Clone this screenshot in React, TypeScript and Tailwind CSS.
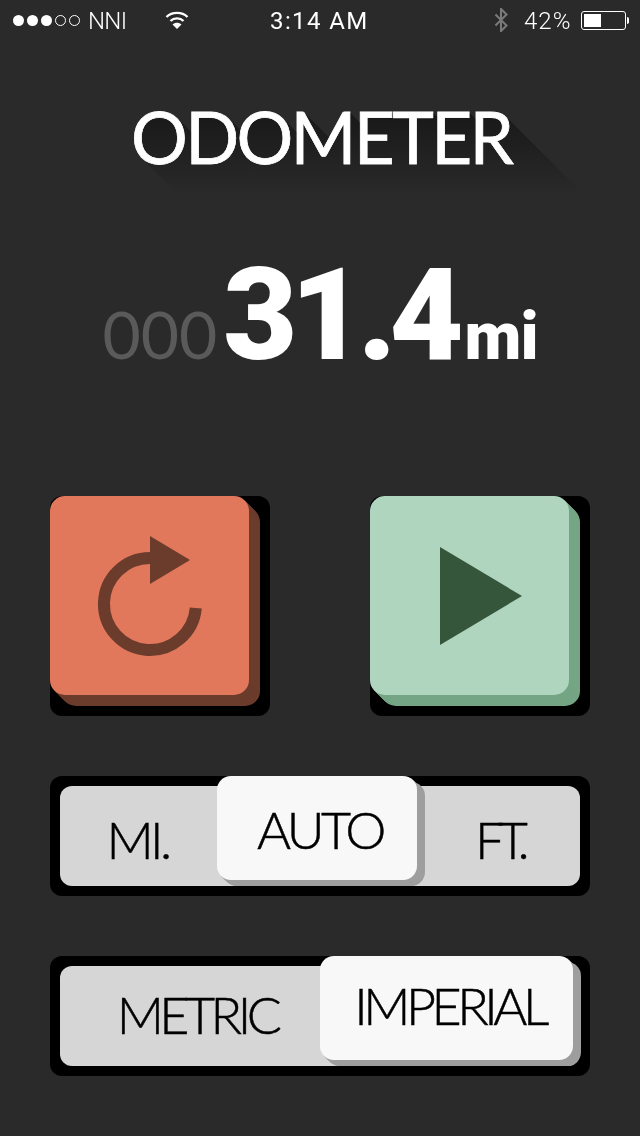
const futura = "font-['Lato','Liberation_Sans',sans-serif]";
const heavy = "font-['Roboto','Liberation_Sans',sans-serif]";

const longShadow = Array.from({ length: 68 }, (_, i) => `${i + 1}px ${i + 1}px 0 #000`).join(",");

function StatusBar() {
  return (
    <div className="flex h-[40px] items-center text-white font-['Roboto','Liberation_Sans',sans-serif] text-[24px] font-light">
      <div className="ml-[13px] flex w-[67px] items-center gap-[3px]">
        {[0, 1, 2].map((i) => (
          <span key={i} className="size-[11px] rounded-full bg-white" />
        ))}
        {[0, 1].map((i) => (
          <span key={i} className="size-[11px] rounded-full border border-white" />
        ))}
      </div>
      <span className="ml-[8px] mt-[1px] w-[38px] tracking-[-0.7px]">NNI</span>
      <svg viewBox="0 0 24 20" className="ml-[39px] -mt-[1px] h-[20px] w-[24px]" fill="none" stroke="white" strokeWidth="2.4">
        <path d="M1.5 7 C7 1.5 17 1.5 22.5 7" />
        <path d="M5.5 11 C9 7.5 15 7.5 18.5 11" />
        <path d="M12 19 L7.5 14.5 C10 12 14 12 16.5 14.5 Z" fill="white" stroke="none" />
      </svg>
      <span className="ml-[81px] mt-[1px] w-[100px] font-normal tracking-[1.4px]">3:14 AM</span>
      <svg viewBox="0 0 16 26" className="ml-[123px] h-[24px] w-[16px]" fill="none" stroke="#7a7a7a" strokeWidth="2.2">
        <path d="M2 7 L14 19 L8 25 L8 1 L14 7 L2 19" />
      </svg>
      <span className="ml-[15px] mt-[1px] w-[51px] tracking-[1px]">42%</span>
      <div className="ml-[6px] flex items-center">
        <div className="h-[19px] w-[45px] rounded-[3px] border border-white p-[2px]">
          <div className="h-full w-[17px] bg-white" />
        </div>
        <div className="ml-[1px] h-[7px] w-[2px] rounded-r-full bg-white" />
      </div>
    </div>
  );
}

function Title() {
  return (
    <div className="relative mt-[50px] h-[105px] overflow-hidden">
      <h1
        className={`${futura} ml-[126px] pl-[5px] text-[71px] leading-[94px] font-normal tracking-[-2.7px] whitespace-nowrap text-white [-webkit-text-stroke:0.8px_white]`}
        style={{ textShadow: longShadow }}
      >
        ODOMETER
      </h1>
      <div className="absolute inset-0 bg-gradient-to-b from-[#141414] to-[#2a2a2a] mix-blend-lighten" />
    </div>
  );
}

function Odometer() {
  return (
    <div className="mt-[60px] flex h-[120px] items-baseline justify-center">
      <span className={`${futura} text-[66px] leading-[120px] font-normal text-[#5a5a5a]`}>000</span>
      <span className={`${heavy} ml-[6px] text-[128px] leading-[120px] font-black tracking-[-7px] text-white`}>31.4</span>
      <span className={`${heavy} ml-[8px] text-[66px] leading-[120px] font-black tracking-[-1px] text-white`}>mi</span>
    </div>
  );
}

function Buttons() {
  return (
    <div className="mx-[50px] mt-[121px] flex justify-between">
      <div className="h-[220px] w-[220px] rounded-[12px] bg-black">
        <button className="flex h-[199px] w-[199px] rounded-[15px] bg-[#e1785b] shadow-[1px_1px_0_#6b3b2c,2px_2px_0_#6b3b2c,3px_3px_0_#6b3b2c,4px_4px_0_#6b3b2c,5px_5px_0_#6b3b2c,6px_6px_0_#6b3b2c,7px_7px_0_#6b3b2c,8px_8px_0_#6b3b2c,9px_9px_0_#6b3b2c,10px_10px_0_#6b3b2c,11px_11px_0_#6b3b2c]">
          <svg viewBox="0 0 199 199" className="h-full w-full" fill="none">
            <path d="M145.8 112 A46 46 0 1 1 100 62" stroke="#6b3b2c" strokeWidth="12" />
            <path d="M100 40 L140 64 L100 88 Z" fill="#6b3b2c" />
          </svg>
        </button>
      </div>
      <div className="h-[220px] w-[220px] rounded-[12px] bg-black">
        <button className="flex h-[199px] w-[199px] rounded-[15px] bg-[#afd5be] shadow-[1px_1px_0_#74a584,2px_2px_0_#74a584,3px_3px_0_#74a584,4px_4px_0_#74a584,5px_5px_0_#74a584,6px_6px_0_#74a584,7px_7px_0_#74a584,8px_8px_0_#74a584,9px_9px_0_#74a584,10px_10px_0_#74a584,11px_11px_0_#74a584]">
          <svg viewBox="0 0 199 199" className="h-full w-full">
            <path d="M70 51 L152 100 L70 149 Z" fill="#36563c" />
          </svg>
        </button>
      </div>
    </div>
  );
}

const thumb =
  "shrink-0 self-start -mt-[10px] h-[104px] rounded-[14px] bg-[#f8f8f8] flex items-center justify-center shadow-[1px_1px_0_#9e9e9e,2px_2px_0_#9e9e9e,3px_3px_0_#9e9e9e,4px_4px_0_#9e9e9e,5px_5px_0_#9e9e9e,6px_6px_0_#9e9e9e,7px_6px_0_#9e9e9e,8px_6px_0_#9e9e9e]";

function Segments() {
  return (
    <div className={`${futura} mx-[50px] font-light text-black [-webkit-text-stroke:0.5px_black]`}>
      <div className="mt-[60px] rounded-[12px] bg-black p-[10px]">
        <div className="flex h-[100px] items-center rounded-[12px] bg-[#d6d6d6] text-[52px] tracking-[-3.6px]">
          <span className="w-[157px] pt-[6px] pr-[2px] text-center">MI.</span>
          <div className={`${thumb} w-[200px] pt-[2px] pl-[6px]`}>AUTO</div>
          <span className="flex-1 pt-[6px] pl-[1px] text-center tracking-[-6.5px]">FT.</span>
        </div>
      </div>
      <div className="mt-[60px] rounded-[12px] bg-black p-[10px]">
        <div className="flex h-[100px] items-center rounded-[12px] bg-[#d6d6d6] text-[52px] tracking-[-4.5px]">
          <span className="w-[260px] pb-[4px] pl-[14px] text-center">METRIC</span>
          <div className={`${thumb} w-[253px] pb-[6px] pl-[6px]`}>IMPERIAL</div>
        </div>
      </div>
    </div>
  );
}

export default function App() {
  return (
    <div className="h-[1136px] w-[640px] overflow-hidden bg-[#2a2a2a]">
      <StatusBar />
      <Title />
      <Odometer />
      <Buttons />
      <Segments />
    </div>
  );
}
